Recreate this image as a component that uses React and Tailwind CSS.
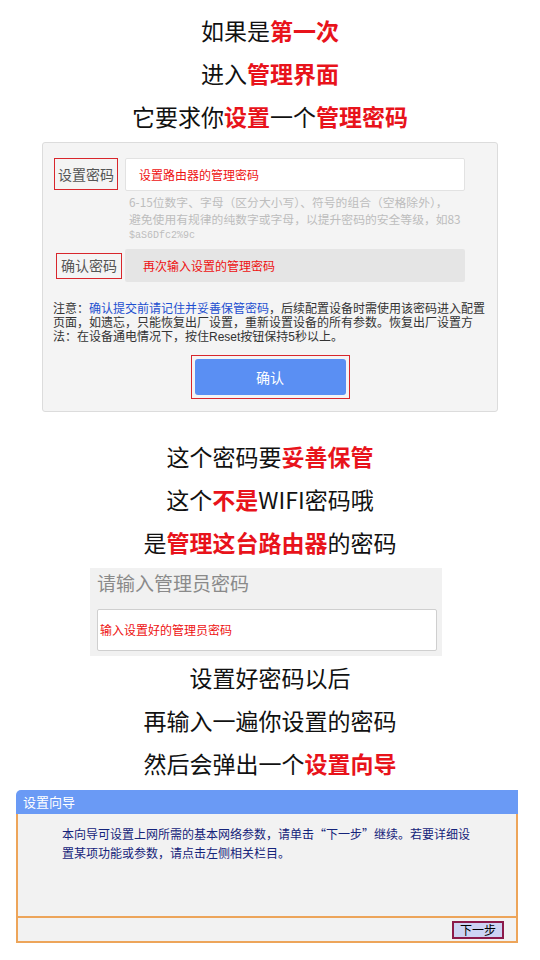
const cjk = { fontFamily: '"Noto Sans CJK SC", "Noto Sans", sans-serif' }
const tight = { fontFamily: '"Liberation Sans", "Noto Sans CJK SC", sans-serif' }

function Line({ parts }) {
  return (
    <div className="h-[43px] leading-[43px] text-center text-[23px] text-[#111]">
      {parts.map(([t, red], i) =>
        red ? (
          <span key={i} className="font-bold text-[#e8131b]">{t}</span>
        ) : (
          <span key={i}>{t}</span>
        )
      )}
    </div>
  )
}

function PasswordCard() {
  return (
    <div className="ml-[42px] mt-[4px] w-[456px] h-[270px] rounded-[3px] border border-[#dcdcdc] bg-[#f4f4f4] pl-[10px] pt-[15px]">
      {/* set password */}
      <div className="flex items-start">
        <div className="ml-[1px] w-[64px] h-[32px] border border-[#d8262c] flex items-center justify-center text-[14px] text-[#555]">
          设置密码
        </div>
        <div className="ml-[7px] w-[340px] h-[33px] rounded-[2px] border border-[#e2e2e2] bg-white flex items-center pl-[13px] text-[12px] text-[#e11]">
          设置路由器的管理密码
        </div>
      </div>
      <div className="ml-[76px] mt-[2px] w-[340px] text-[11.8px] leading-[17px] text-[#bdbdbd]">
        <div>6-15位数字、字母（区分大小写）、符号的组合（空格除外），</div>
        <div>避免使用有规律的纯数字或字母，以提升密码的安全等级，如83</div>
        <div className="text-[10px]" style={{ fontFamily: '"Liberation Mono", monospace' }}>$aS6Dfc2%9c</div>
      </div>
      {/* confirm password */}
      <div className="flex items-center mt-[5px]">
        <div className="ml-[3px] w-[66px] h-[26px] border border-[#d8262c] flex items-center justify-center text-[14px] text-[#555]">
          确认密码
        </div>
        <div className="ml-[3px] w-[340px] h-[33px] rounded-[2px] bg-[#e5e5e5] flex items-center pl-[18px] text-[12px] text-[#e11]">
          再次输入设置的管理密码
        </div>
      </div>
      {/* note */}
      <div className="mt-[20px] text-[12px] leading-[14px] text-[#333] whitespace-nowrap" style={tight}>
        <div className="flex">
          <span>注意：</span>
          <span className="text-[#1d4fd0]">确认提交前请记住并妥善保管密码</span>
          <span>，后续配置设备时需使用该密码进入配置</span>
        </div>
        <div>页面，如遗忘，只能恢复出厂设置，重新设置设备的所有参数。恢复出厂设置方</div>
        <div>法：在设备通电情况下，按住Reset按钮保持5秒以上。</div>
      </div>
      <div className="mt-[11px] flex justify-center pr-[10px]">
        <div className="w-[159px] h-[44px] border border-[#d8262c] p-[3px]">
          <div className="h-full rounded-[3px] bg-[#5a8ff3] flex items-center justify-center text-[14px] text-white">
            确认
          </div>
        </div>
      </div>
    </div>
  )
}

function LoginBox() {
  return (
    <div className="ml-[90px] mt-[4px] w-[352px] h-[88px] bg-[#f1f1f1] px-[7px] pt-[2px]">
      <div className="text-[19px] leading-[26px] text-[#8a8a8a]">请输入管理员密码</div>
      <div className="mt-[13px] w-[340px] h-[42px] rounded-[2px] border border-[#cfcfcf] bg-white flex items-center pl-[2px] text-[12px] text-[#e11]">
        输入设置好的管理员密码
      </div>
    </div>
  )
}

function Wizard() {
  return (
    <div className="ml-[16px] mt-[5px] w-[502px]">
      <div className="h-[24px] rounded-tl-[5px] bg-[#6a9af5] flex items-center pl-[7px] text-[13px] text-white">
        设置向导
      </div>
      <div className="h-[102px] border-x-2 border-[#eda55a] bg-[#f2f2f2] pl-[44px] pt-[10px] text-[12px] leading-[19px] text-[#15247a]">
        <div>本向导可设置上网所需的基本网络参数，请单击“下一步”继续。若要详细设</div>
        <div>置某项功能或参数，请点击左侧相关栏目。</div>
      </div>
      <div className="h-[27px] border-2 border-[#eda55a] bg-[#f2f2f2] flex items-center justify-end pr-[12px]">
        <div className="w-[52px] h-[18px] border-2 border-[#8c1a4a] bg-[#cdd3f3] flex items-center justify-center text-[12px] text-black">
          下一步
        </div>
      </div>
    </div>
  )
}

export default function App() {
  return (
    <div className="w-[540px] h-[960px] bg-white overflow-hidden" style={cjk}>
      <div className="pt-[9px]">
        <Line parts={[['如果是'], ['第一次', true]]} />
        <Line parts={[['进入'], ['管理界面', true]]} />
        <Line parts={[['它要求你'], ['设置', true], ['一个'], ['管理密码', true]]} />
      </div>
      <PasswordCard />
      <div className="mt-[23px]">
        <Line parts={[['这个密码要'], ['妥善保管', true]]} />
        <Line parts={[['这个'], ['不是', true], ['WIFI密码哦']]} />
        <Line parts={[['是'], ['管理这台路由器', true], ['的密码']]} />
      </div>
      <LoginBox />
      <div>
        <Line parts={[['设置好密码以后']]} />
        <Line parts={[['再输入一遍你设置的密码']]} />
        <Line parts={[['然后会弹出一个'], ['设置向导', true]]} />
      </div>
      <Wizard />
    </div>
  )
}
